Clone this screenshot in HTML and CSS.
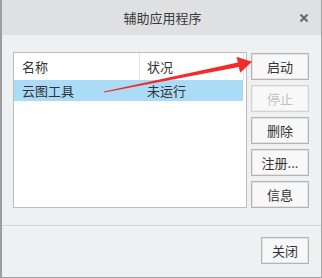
FILE: index.html
```html
<!DOCTYPE html>
<html>
  <head>
    <title>辅助应用程序</title>
    <meta charset="utf-8"/>
    <link rel="stylesheet" href="styles.css">
  </head>
  <body>
    <div class="dialog">
      <div class="titlebar">
        <span class="title">辅助应用程序</span>
        <svg class="close-x" width="10" height="10" viewBox="0 0 10 10">
          <path d="M1.5 1.5 L8.5 8.5 M8.5 1.5 L1.5 8.5" stroke="#6a6a6a" stroke-width="2.2" fill="none"/>
        </svg>
      </div>

      <div class="content">
        <div class="listbox">
          <div class="list-head">
            <div class="col col-name">名称</div>
            <div class="col col-state">状况</div>
            <div class="col col-rest"></div>
          </div>
          <div class="list-row selected">
            <div class="col col-name">云图工具</div>
            <div class="col col-state">未运行</div>
          </div>
        </div>

        <div class="side-buttons">
          <button class="btn">启动</button>
          <button class="btn" disabled>停止</button>
          <button class="btn">删除</button>
          <button class="btn">注册...</button>
          <button class="btn">信息</button>
        </div>
      </div>

      <div class="footer">
        <button class="btn btn-close">关闭</button>
      </div>

      <!-- red annotation arrow drawn over the dialog -->
      <svg class="annotation" width="322" height="278" viewBox="0 0 322 278">
        <polygon fill="#f42b2b" points="104,91.4 237.9,62.6 236.4,56.8 252,61.8 240.2,72.8 238.7,67 104.3,92.6"/>
      </svg>
    </div>
  </body>
</html>
```

FILE: styles.css
```css
html, body {
  margin: 0;
  padding: 0;
}
body {
  font-family: "Noto Sans CJK SC", "Liberation Sans", sans-serif;
  font-size: 13px;
  color: #333;
}

.dialog {
  position: relative;
  box-sizing: border-box;
  width: 322px;
  height: 278px;
  background: #eff0f2;
  border: 1px solid #a3a3a3;
  border-top: none;
  border-left: 2px solid #9e9e9e;
}

/* title bar */
.titlebar {
  position: relative;
  height: 35px;
  background: #dee0e2;
  display: flex;
  align-items: center;
  justify-content: center;
}
.title {
  font-size: 13px;
  color: #3a3a3a;
  margin-left: 2px;
}
.close-x {
  position: absolute;
  right: 12px;
  top: 13px;
}

/* main area */
.content {
  display: flex;
  gap: 4px;
  padding: 17px 12px 17px 11px;
}

.listbox {
  box-sizing: border-box;
  width: 234px;
  height: 156px;
  background: #fff;
  border: 1px solid #bdbdbd;
}
.list-head, .list-row {
  display: flex;
}
.list-head {
  height: 27px;
  align-items: center;
}
.list-row {
  height: 21px;
  align-items: center;
  margin-right: 3px;
}
.list-row.selected {
  background: #aadcf7;
}
.col {
  box-sizing: border-box;
  white-space: nowrap;
  line-height: 21px;
}
.col-name {
  width: 126px;
  padding-left: 8px;
}
.col-state {
  flex: 1;
  padding-left: 7px;
}
.list-head .col {
  height: 27px;
  line-height: 27px;
}
.list-head .col-name {
  border-right: 1px solid #e4e4e4;
}
.col-rest {
  width: 3px;
  border-left: 1px solid #e4e4e4;
}

/* buttons */
.side-buttons {
  display: flex;
  flex-direction: column;
  gap: 5px;
  padding-top: 1px;
}
.btn {
  box-sizing: border-box;
  width: 58px;
  height: 27px;
  padding: 0;
  font-family: inherit;
  font-size: 13px;
  color: #333;
  background: #f8f8f8;
  border: 1px solid #b4b4b4;
  box-shadow: inset 0 0 0 1px #e4e4e4;
  border-radius: 0;
}
.btn:disabled {
  color: #c2c2c2;
  border-color: #d4d4d4;
  box-shadow: inset 0 0 0 1px #ececec;
}

.footer {
  border-top: 1px solid #d2d2d2;
  box-shadow: inset 0 1px 0 #f8f8f8;
  padding: 11px 12px 0 0;
  display: flex;
  justify-content: flex-end;
}
.btn-close {
  width: 48px;
}

.annotation {
  position: absolute;
  left: -2px;
  top: 0;
  pointer-events: none;
}
```
